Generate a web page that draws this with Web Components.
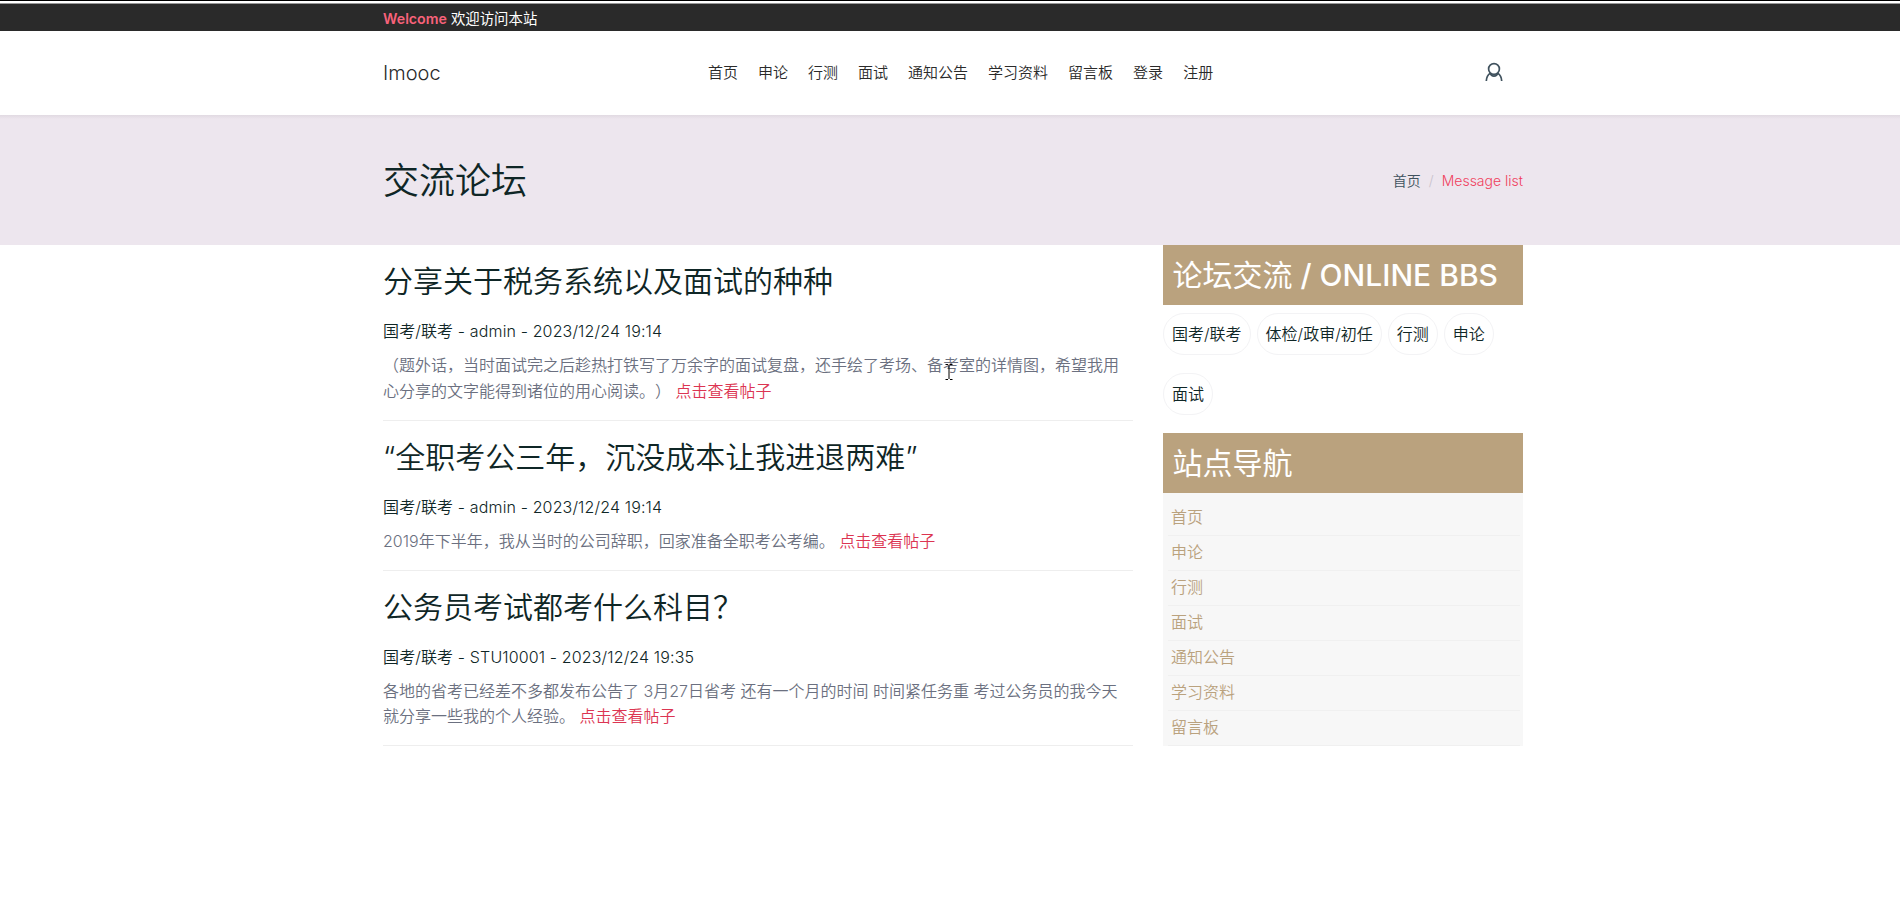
<!DOCTYPE html>
<html lang="zh-CN">
<head>
<meta charset="utf-8">
<title>交流论坛</title>
<style>
body{margin:0;background:#fff;font-family:Inter,"Noto Sans CJK SC",sans-serif;font-size:16px;font-weight:350;line-height:25.6px;color:#0f2626;text-spacing-trim:space-all}
</style>
</head>
<body>
<forum-page></forum-page>
<script>
const def=(name,html)=>{
  const t=document.createElement('template');t.innerHTML=html;
  customElements.define(name,class extends HTMLElement{
    constructor(){super();this.attachShadow({mode:'open'}).append(t.content.cloneNode(true));}
  });
};
def('top-bar',`<style>
:host{display:block;height:31px;box-sizing:border-box;background:#2a2a2a;border-top:1px solid #000;}
.gap{height:2px;background:#fff;border-bottom:1px solid #999}
.in{width:1140px;margin:0 auto;position:relative;left:3px;height:27px;display:flex;align-items:center;gap:4px;font-size:14.4px;color:#fff;font-weight:400;padding-top:3px;box-sizing:border-box}
b{color:#f8627a;font-weight:600;font-size:14.2px}
</style><div class="gap"></div><div class="in"><b>Welcome</b><slot></slot></div>`);
def('nav-item',`<style>:host{display:block;font-size:15px;color:#2a2a2a;white-space:nowrap}</style><slot></slot>`);
def('site-header',`<style>
:host{display:block;height:84px;background:#fff}
.in{width:1140px;margin:0 auto;position:relative;left:3px;height:84px;display:grid;grid-template-columns:325px 1fr auto;align-items:center}
.brand{font-size:20px;color:#2a2a2a;font-weight:300;padding-top:2px}
nav{display:flex;gap:20px}
svg{display:block;margin:0 20px 2px 0}
</style><div class="in"><div class="brand">Imooc</div><nav><slot></slot></nav>
<svg width="18" height="20" viewBox="0 0 18 20" fill="none" stroke="#40525e" stroke-width="1.7"><circle cx="9" cy="7" r="5.4"/><path d="M1.3 19C1.4 15.4 3 12.7 5.4 11.1M16.7 19C16.6 15.4 15 12.7 12.6 11.1M5.4 11.1C6.2 15.2 11.8 15.2 12.6 11.1"/></svg></div>`);
def('page-banner',`<style>
:host{display:block;height:130px;background:linear-gradient(#e1dae2,#ede6ee 4px)}
.in{width:1140px;margin:0 auto;position:relative;left:3px;height:130px;padding-top:2px;box-sizing:border-box;display:flex;align-items:center;justify-content:space-between}
h1{margin:0;font-size:36px;line-height:40px;font-weight:350}
.crumb{display:flex;gap:8px;font-size:14px;color:#40525e;font-weight:350}
.crumb i{font-style:normal;color:#c8c2cc}.crumb span{color:#f03e5c}
</style><div class="in"><h1><slot></slot></h1><div class="crumb">首页<i>/</i><span>Message list</span></div></div>`);
def('forum-post',`<style>
:host{display:block;border-bottom:1px solid #eee;padding:18px 0 15.4px}
h2{margin:0;font-size:30px;line-height:36px;font-weight:350}
.meta{margin-top:20px;letter-spacing:.13px}
p{margin:8.4px 0 0;color:#6b7080}
a{color:#dc3552}
</style><h2><slot name="title"></slot></h2><div class="meta"><slot name="meta"></slot></div><p><slot></slot> <a>点击查看帖子</a></p>`);
def('side-title',`<style>:host{display:block;height:60px;line-height:60px;padding-left:9.5px;background:#baa27e;color:#fff;font-size:30px;font-weight:400;box-sizing:border-box;white-space:nowrap}::slotted(span){font-weight:500}</style><slot></slot>`);
def('tag-pill',`<style>:host{display:block;box-sizing:border-box;height:42px;line-height:40px;border:1px solid #f3f3f5;border-radius:21px;padding:0 8px;white-space:nowrap}</style><slot></slot>`);
def('tag-list',`<style>:host{display:flex;flex-wrap:wrap;gap:18px 6px;padding:8px 20px 18px 0}</style><slot></slot>`);
def('side-link',`<style>:host{display:block;box-sizing:border-box;height:35px;line-height:32px;padding-left:3px;border-bottom:1px solid #f0f0f0;color:#baa27e}</style><slot></slot>`);
def('side-nav',`<style>:host{display:block;background:#f7f7f7;padding:8px 3px 0 5px}</style><slot></slot>`);
def('forum-page',`<style>
:host{display:block}
main{width:1140px;margin:0 auto;position:relative;left:3px;display:grid;grid-template-columns:750px 360px;column-gap:30px;align-items:start}
.caret{position:absolute;left:562px;top:119px}
</style>
<top-bar>欢迎访问本站</top-bar>
<site-header><nav-item>首页</nav-item><nav-item>申论</nav-item><nav-item>行测</nav-item><nav-item>面试</nav-item><nav-item>通知公告</nav-item><nav-item>学习资料</nav-item><nav-item>留言板</nav-item><nav-item>登录</nav-item><nav-item>注册</nav-item></site-header>
<page-banner>交流论坛</page-banner>
<main><section>
<forum-post><span slot="title">分享关于税务系统以及面试的种种</span><span slot="meta">国考/联考 - admin - 2023/12/24 19:14</span>（题外话，当时面试完之后趁热打铁写了万余字的面试复盘，还手绘了考场、备考室的详情图，希望我用心分享的文字能得到诸位的用心阅读。）</forum-post>
<forum-post><span slot="title">“全职考公三年，沉没成本让我进退两难”</span><span slot="meta">国考/联考 - admin - 2023/12/24 19:14</span>2019年下半年，我从当时的公司辞职，回家准备全职考公考编。</forum-post>
<forum-post><span slot="title">公务员考试都考什么科目？</span><span slot="meta">国考/联考 - STU10001 - 2023/12/24 19:35</span>各地的省考已经差不多都发布公告了 3月27日省考 还有一个月的时间 时间紧任务重 考过公务员的我今天就分享一些我的个人经验。</forum-post>
</section><aside>
<side-title>论坛交流<span> / ONLINE BBS</span></side-title>
<tag-list><tag-pill>国考/联考</tag-pill><tag-pill>体检/政审/初任</tag-pill><tag-pill>行测</tag-pill><tag-pill>申论</tag-pill><tag-pill>面试</tag-pill></tag-list>
<side-title>站点导航</side-title>
<side-nav><side-link>首页</side-link><side-link>申论</side-link><side-link>行测</side-link><side-link>面试</side-link><side-link>通知公告</side-link><side-link>学习资料</side-link><side-link>留言板</side-link></side-nav>
</aside>
<svg class="caret" width="8" height="17" fill="none" stroke="#000"><path d="M.5 .5H3M5 .5H7.5M.5 15.5H3M5 15.5H7.5M4 1.5V15" /></svg>
</main>`);
</script>
</body>
</html>
